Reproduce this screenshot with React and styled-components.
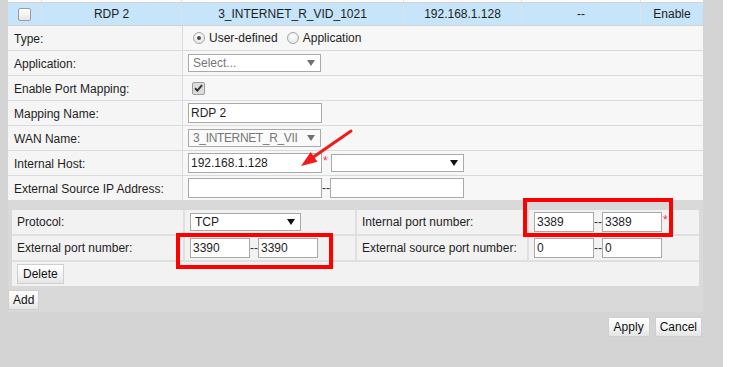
import React from "react";
import styled, { createGlobalStyle } from "styled-components";

const Global = createGlobalStyle`
  html, body { margin: 0; padding: 0; background: #ffffff; }
  body { font-family: "Liberation Sans", Arial, sans-serif; font-size: 12px; color: #1e1e1e; }
  * { box-sizing: border-box; }
`;

const Page = styled.div`
  position: relative;
  width: 723px;
  height: 367px;
  background: #d4d4d4;
  padding-left: 8px;
  overflow: hidden;
`;

const Panel = styled.div`
  width: 695px;
  background: #d9d9d9;
  padding-bottom: 1px;
`;

const ListRow = styled.div`
  display: flex;
  height: ${(p) => p.$h}px;
  background: ${(p) => p.$bg};
  border-bottom: 1px solid #d3d3d3;
`;

const ListCell = styled.div`
  width: ${(p) => p.$w}px;
  flex: none;
  display: flex;
  align-items: center;
  justify-content: center;
  border-left: ${(p) => (p.$first ? "none" : "1px solid #dfe3e6")};
  white-space: nowrap;
`;

const FormRow = styled.div`
  display: flex;
  height: 25px;
  border-bottom: 1px solid #dadada;
  background: #f7f7f7;
`;

const LabelCell = styled.div`
  width: 175px;
  flex: none;
  display: flex;
  align-items: center;
  padding-left: 6px;
  padding-top: 1px;
  border-right: 1px solid #dcdcdc;
  background: #f5f5f5;
`;

const ValueCell = styled.div`
  flex: 1;
  display: flex;
  align-items: center;
  padding-left: ${(p) => p.$pad ?? 5}px;
`;

const Input = styled.input`
  width: ${(p) => p.$w}px;
  height: 20px;
  border: 1px solid #a9a9a9;
  background: #fff;
  padding: 0 2px;
  margin: 0;
  font: 12px "Liberation Sans", Arial, sans-serif;
  color: #1e1e1e;
  outline: none;
`;

const Select = styled.div`
  width: ${(p) => p.$w}px;
  height: 18px;
  border: 1px solid #a9a9a9;
  background: ${(p) => (p.$disabled ? "#fafafa" : "#fff")};
  color: ${(p) => (p.$muted ? "#777" : "#1e1e1e")};
  display: flex;
  align-items: center;
  gap: 3px;
  padding: 0 5px 0 4px;
  font-size: 12px;
  white-space: nowrap;
  overflow: hidden;
`;

const SelectText = styled.span`
  flex: 1;
  white-space: nowrap;
  letter-spacing: ${(p) => p.$ls ?? 0}px;
`;

const Arrow = styled.span`
  width: 0;
  height: 0;
  flex: none;
  border-left: 4px solid transparent;
  border-right: 4px solid transparent;
  border-top: 6px solid ${(p) => (p.$muted ? "#707070" : "#111")};
`;

const Radio = styled.span`
  width: 12px;
  height: 12px;
  flex: none;
  border-radius: 50%;
  border: 1px solid #a6a6a6;
  background: radial-gradient(circle at 50% 35%, #ffffff, #e0e0e0);
  margin: 0 4px 0 ${(p) => p.$ml}px;
  display: flex;
  align-items: center;
  justify-content: center;
  &::after {
    content: "";
    width: 4px;
    height: 4px;
    border-radius: 50%;
    background: ${(p) => (p.$on ? "#4a4a4a" : "transparent")};
  }
`;

const Box = styled.span`
  width: 13px;
  height: 13px;
  flex: none;
  border: 1px solid #9c9c9c;
  border-radius: 2px;
  background: ${(p) => (p.$checked ? "#dcdcdc" : "linear-gradient(#ffffff, #e6e6e6)")};
  margin-left: ${(p) => p.$ml ?? 0}px;
  display: flex;
  align-items: center;
  justify-content: center;
`;

const Dash = styled.span`
  width: 8px;
  flex: none;
  text-align: center;
  color: #333;
`;

const Star = styled.span`
  color: #ff2a4a;
  font-size: 12px;
  align-self: flex-start;
  margin-top: 3px;
  width: 9px;
  padding-left: 1px;
`;

const Gap = styled.div`
  height: 9px;
`;

const PortGrid = styled.div`
  margin: 0 4px;
  display: grid;
  grid-template-columns: 171px 170px 170px 170px;
  grid-auto-rows: 24px;
  gap: 2px;
  background: #dfdfdf;
`;

const PCell = styled.div`
  background: #f2f2f2;
  display: flex;
  align-items: center;
  padding-left: 5px;
  grid-column: ${(p) => p.$span ?? "auto"};
`;

const Btn = styled.button`
  height: 20px;
  padding: 0 ${(p) => p.$px ?? 5}px;
  border: 1px solid #cfcfcf;
  background: linear-gradient(#ffffff 0%, #f3f3f3 60%, #e4e4e4 100%);
  font: 12px "Liberation Sans", Arial, sans-serif;
  color: #111;
  margin: 0;
  cursor: pointer;
`;

const AddWrap = styled.div`
  margin-top: 4px;
  height: 21px;
`;

const Actions = styled.div`
  width: 695px;
  display: flex;
  justify-content: flex-end;
  gap: 5px;
  margin-top: 5px;
  padding-right: 1px;
`;

const RedBox = styled.div`
  position: absolute;
  left: ${(p) => p.$x}px;
  top: ${(p) => p.$y}px;
  width: ${(p) => p.$w}px;
  height: ${(p) => p.$h}px;
  border: 4px solid #ff0000;
  pointer-events: none;
`;

const ArrowSvg = styled.svg`
  position: absolute;
  left: 0;
  top: 0;
  pointer-events: none;
`;

const listCols = [33, 140, 222, 118, 119, 63];

function CheckMark() {
  return (
    <svg width="9" height="8" viewBox="0 0 9 8">
      <path d="M1 4.2 L3.4 6.6 L8 1.2" fill="none" stroke="#333" strokeWidth="2" />
    </svg>
  );
}

export default function App() {
  return (
    <>
      <Global />
      <Page>
        <Panel>
          <ListRow $h={3} $bg="#fafafa">
            {listCols.map((w, i) => (
              <ListCell key={i} $w={w} $first={i === 0} />
            ))}
          </ListRow>
          <ListRow $h={23} $bg="#c6e4fa">
            <ListCell $w={33} $first>
              <Box />
            </ListCell>
            <ListCell $w={140}>RDP 2</ListCell>
            <ListCell $w={222}>3_INTERNET_R_VID_1021</ListCell>
            <ListCell $w={118}>192.168.1.128</ListCell>
            <ListCell $w={119}>--</ListCell>
            <ListCell $w={63}>Enable</ListCell>
          </ListRow>

          <FormRow>
            <LabelCell>Type:</LabelCell>
            <ValueCell $pad={0}>
              <Radio $ml={10} $on />
              User-defined
              <Radio $ml={9} />
              Application
            </ValueCell>
          </FormRow>
          <FormRow>
            <LabelCell>Application:</LabelCell>
            <ValueCell>
              <Select $w={133} $muted>
                <SelectText>Select...</SelectText>
                <Arrow $muted />
              </Select>
            </ValueCell>
          </FormRow>
          <FormRow>
            <LabelCell>Enable Port Mapping:</LabelCell>
            <ValueCell>
              <Box $checked $ml={4}>
                <CheckMark />
              </Box>
            </ValueCell>
          </FormRow>
          <FormRow>
            <LabelCell>Mapping Name:</LabelCell>
            <ValueCell>
              <Input $w={134} defaultValue="RDP 2" />
            </ValueCell>
          </FormRow>
          <FormRow>
            <LabelCell>WAN Name:</LabelCell>
            <ValueCell>
              <Select $w={133} $muted $disabled>
                <SelectText $ls={-0.35}>3_INTERNET_R_VII</SelectText>
                <Arrow $muted />
              </Select>
            </ValueCell>
          </FormRow>
          <FormRow>
            <LabelCell>Internal Host:</LabelCell>
            <ValueCell>
              <Input $w={134} defaultValue="192.168.1.128" />
              <Star>*</Star>
              <Select $w={133}>
                <SelectText />
                <Arrow />
              </Select>
            </ValueCell>
          </FormRow>
          <FormRow>
            <LabelCell>External Source IP Address:</LabelCell>
            <ValueCell>
              <Input $w={134} defaultValue="" />
              <Dash>--</Dash>
              <Input $w={134} defaultValue="" />
            </ValueCell>
          </FormRow>

          <Gap />

          <PortGrid>
            <PCell>Protocol:</PCell>
            <PCell>
              <Select $w={111}>
                <SelectText>TCP</SelectText>
                <Arrow />
              </Select>
            </PCell>
            <PCell>Internal port number:</PCell>
            <PCell>
              <Input $w={60} defaultValue="3389" />
              <Dash>--</Dash>
              <Input $w={60} defaultValue="3389" />
              <Star>*</Star>
            </PCell>
            <PCell>External port number:</PCell>
            <PCell>
              <Input $w={60} defaultValue="3390" />
              <Dash>--</Dash>
              <Input $w={60} defaultValue="3390" />
            </PCell>
            <PCell>External source port number:</PCell>
            <PCell>
              <Input $w={60} defaultValue="0" />
              <Dash>--</Dash>
              <Input $w={60} defaultValue="0" />
            </PCell>
            <PCell $span="1 / -1">
              <Btn $px={5}>Delete</Btn>
            </PCell>
          </PortGrid>

          <AddWrap>
            <Btn $px={4}>Add</Btn>
          </AddWrap>
        </Panel>

        <Actions>
          <Btn $px={5}>Apply</Btn>
          <Btn $px={4}>Cancel</Btn>
        </Actions>

        <RedBox $x={523} $y={198} $w={150} $h={39} />
        <RedBox $x={176} $y={233} $w={157} $h={36} />

        <ArrowSvg width="749" height="367" viewBox="0 0 749 367">
          <line x1="351" y1="131" x2="312" y2="158" stroke="#f21b1b" strokeWidth="3" strokeLinecap="round" />
          <polygon points="301,166 317.5,161.7 310.7,151.9" fill="#f21b1b" />
        </ArrowSvg>
      </Page>
    </>
  );
}
